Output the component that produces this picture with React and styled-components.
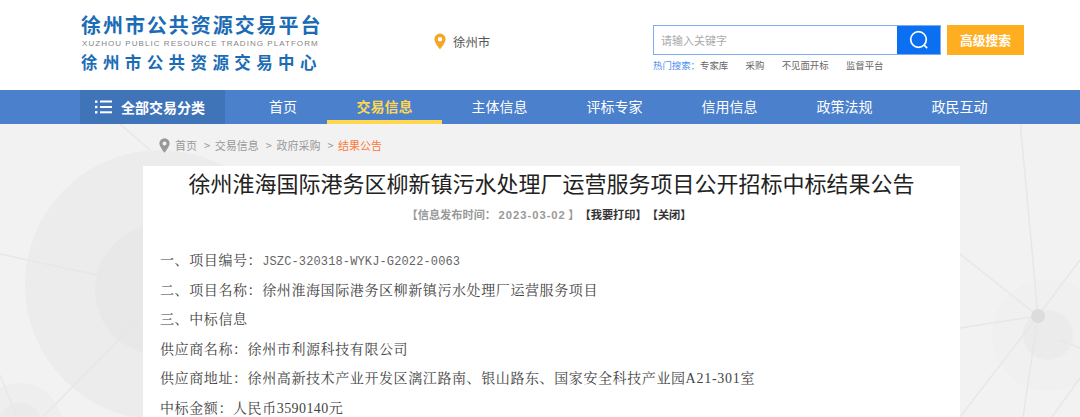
import React from 'react';
import styled, { createGlobalStyle } from 'styled-components';

const sans = `"Noto Sans CJK SC", "Liberation Sans", sans-serif`;
const serif = `"Noto Serif CJK SC", "Noto Sans CJK SC", "Liberation Serif", serif`;

const GlobalStyle = createGlobalStyle`
    html, body {
        margin: 0;
        padding: 0;
        height: 417px;
        overflow: hidden;
        background: #f2f2f2;
        font-family: ${sans};
    }
`;

const Page = styled.div`
    position: relative;
    width: 1080px;
    height: 417px;
    overflow: hidden;
`;

const Header = styled.header`
    height: 90px;
    background: #fff;
    display: grid;
    grid-template-columns: 353px 219px auto;
    padding-left: 81px;
    box-sizing: border-box;
`;

const Logo = styled.div`
    width: 240px;
    padding-top: 11px;
    color: #1b6cb5;
    font-weight: 700;
`;

const LogoLine = styled.div`
    font-size: ${props => props.size}px;
    line-height: ${props => props.height}px;
    letter-spacing: ${props => props.spacing}px;
    white-space: nowrap;
`;

const LogoSub = styled.div`
    font-family: "Liberation Sans", sans-serif;
    font-size: 8px;
    font-weight: 400;
    line-height: 12px;
    letter-spacing: 1.05px;
    color: #858585;
    white-space: nowrap;
    padding-left: 1px;
`;

const City = styled.div`
    display: flex;
    align-items: center;
    gap: 7px;
    height: 83px;
    font-size: 12.4px;
    color: #555;
`;

const SearchArea = styled.div`
    padding-top: 25px;
`;

const SearchRow = styled.div`
    display: flex;
    gap: 6px;
`;

const SearchBox = styled.div`
    width: 288px;
    height: 30px;
    box-sizing: border-box;
    border: 1px solid #7fabee;
    display: flex;
`;

const SearchInput = styled.input`
    flex: 1;
    min-width: 0;
    border: 0;
    outline: 0;
    padding: 0 0 0 7px;
    font-family: ${sans};
    font-size: 11px;
    &::placeholder {
        color: #aaa;
        opacity: 1;
    }
`;

const SearchButton = styled.div`
    width: 43px;
    background: #0a6ff0;
    display: flex;
    align-items: center;
    justify-content: center;
`;

const AdvancedButton = styled.div`
    width: 77px;
    height: 30px;
    background: #ffae22;
    color: #fff;
    font-size: 12.8px;
    font-weight: 700;
    line-height: 30px;
    text-align: center;
`;

const HotRow = styled.div`
    display: flex;
    margin-top: 4px;
    font-size: 9.4px;
    line-height: 13px;
    color: #666;
`;

const HotLabel = styled.span`
    color: #4b8ff0;
    width: 47px;
`;

const HotLink = styled.span`
    margin-right: 17.4px;
`;

const Nav = styled.nav`
    height: 34px;
    background: #4a80cc;
    display: flex;
    padding-left: 80px;
`;

const Category = styled.div`
    width: 145px;
    background: #3f74b9;
    color: #fff;
    display: flex;
    align-items: center;
    gap: 9px;
    padding-left: 15px;
    box-sizing: border-box;
    font-size: 14px;
    font-weight: 700;
`;

const NavItem = styled.div`
    width: 115px;
    box-sizing: border-box;
    text-align: center;
    font-size: 14px;
    line-height: 33px;
    color: ${props => (props.active ? '#ffd64f' : '#fff')};
    font-weight: ${props => (props.active ? 700 : 400)};
    border-bottom: ${props => (props.active ? '4px solid #ffd64f' : '0')};
    &:nth-of-type(2) {
        width: 102px;
        padding-left: 14px;
    }
`;

const Backdrop = styled.svg`
    position: absolute;
    left: 0;
    top: 124px;
    z-index: 0;
`;

const Main = styled.main`
    position: relative;
    z-index: 1;
    width: 817px;
    margin-left: 143px;
`;

const Crumbs = styled.div`
    height: 42px;
    padding-left: 16px;
    display: flex;
    align-items: center;
    font-size: 11px;
    color: #999;
`;

const Crumb = styled.span`
    color: ${props => (props.current ? '#ff7a3a' : '#999')};
    margin-left: ${props => props.gap || 0}px;
`;

const Article = styled.article`
    background: #fff;
    height: 251px;
    overflow: hidden;
`;

const Title = styled.h1`
    margin: 0;
    text-align: center;
    font-size: 22px;
    font-weight: 400;
    line-height: 33px;
    color: #222;
    white-space: nowrap;
`;

const Meta = styled.div`
    margin-top: 7px;
    padding-right: 5px;
    display: flex;
    justify-content: center;
    font-size: 11.2px;
    font-weight: 700;
    line-height: 17px;
    color: #333;
`;

const MetaDate = styled.span`
    color: #999;
`;

const MetaNumber = styled.span`
    font-family: "Liberation Sans", sans-serif;
    letter-spacing: 1px;
`;

const Body = styled.div`
    padding: 21px 0 0 17px;
    font-family: ${serif};
    font-size: 14px;
    letter-spacing: 0.6px;
    color: #444;
`;

const Line = styled.p`
    margin: 0;
    line-height: 29.5px;
    white-space: nowrap;
`;

const Code = styled.span`
    font-family: "Liberation Mono", monospace;
    font-size: 12px;
    line-height: 1;
    letter-spacing: 0.13px;
    color: #666;
`;

const Latin = styled.span`
    font-family: "Liberation Serif", serif;
    line-height: 1;
    letter-spacing: ${props => props.spacing}px;
`;

const PinIcon = ({ color, w, h }) => (
    <svg width={w} height={h} viewBox="0 0 12 16">
        <path
            fillRule="evenodd"
            fill={color}
            d="M6 0a5.6 5.6 0 0 0-5.6 5.6C.4 9.4 6 16 6 16s5.6-6.6 5.6-10.4A5.6 5.6 0 0 0 6 0Zm0 3.5a2.2 2.2 0 1 1 0 4.4 2.2 2.2 0 0 1 0-4.4Z"
        />
    </svg>
);

const MenuIcon = () => (
    <svg width="17" height="14" viewBox="0 0 17 14" fill="#fff">
        <rect x="0" y="0.5" width="2.4" height="2.4" />
        <rect x="0" y="5.8" width="2.4" height="2.4" />
        <rect x="0" y="11.1" width="2.4" height="2.4" />
        <rect x="5" y="0.5" width="12" height="2" />
        <rect x="5" y="6" width="12" height="2" />
        <rect x="5" y="11.3" width="12" height="2" />
    </svg>
);

const SearchIcon = () => (
    <svg width="20" height="20" viewBox="0 0 20 20" fill="none" stroke="#fff" strokeWidth="1.7">
        <circle cx="9.5" cy="9.5" r="7.8" />
        <path d="M15.4 15.4l2.8 2.8" />
    </svg>
);

const bgLines = [
    'M0 254L143 285', 'M143 315L43 417', 'M0 375L17 417',
    'M120 124L150 150', 'M1038 316L960 254', 'M1038 316L960 328',
    'M1038 316L960 417', 'M1038 316L1023 417', 'M1038 316L1020 120',
    'M1038 316L1080 260', 'M1080 378L1052 417', 'M1060 340L1080 348',
];

const Background = () => (
    <Backdrop width="1080" height="293" viewBox="0 124 1080 293">
        <circle cx="160" cy="285" r="135" fill="#ececec" />
        <circle cx="160" cy="290" r="65" fill="#e8e8e8" />
        <circle cx="20" cy="425" r="42" fill="#eeeeee" />
        <circle cx="20" cy="425" r="22" fill="#eaeaea" />
        <circle cx="1048" cy="335" r="56" fill="#f0f0f0" />
        <circle cx="1048" cy="335" r="25" fill="#ebebeb" />
        {bgLines.map(d => (
            <path key={d} d={d} stroke="#e7e7e7" strokeWidth="1.5" fill="none" />
        ))}
        <circle cx="1038" cy="316" r="7" fill="#dcdcdc" />
    </Backdrop>
);

const navItems = ['首页', '交易信息', '主体信息', '评标专家', '信用信息', '政策法规', '政民互动'];
const hotLinks = ['专家库', '采购', '不见面开标', '监督平台'];

export default function App() {
    return (
        <Page>
            <GlobalStyle />
            <Header>
                <Logo>
                    <LogoLine size={20} height={27} spacing={1.95}>徐州市公共资源交易平台</LogoLine>
                    <LogoSub>XUZHOU PUBLIC RESOURCE TRADING PLATFORM</LogoSub>
                    <LogoLine size={16.5} height={24} spacing={5.4}>徐州市公共资源交易中心</LogoLine>
                </Logo>
                <City>
                    <PinIcon color="#f5a623" w={12} h={17} />
                    徐州市
                </City>
                <SearchArea>
                    <SearchRow>
                        <SearchBox>
                            <SearchInput placeholder="请输入关键字" />
                            <SearchButton><SearchIcon /></SearchButton>
                        </SearchBox>
                        <AdvancedButton>高级搜索</AdvancedButton>
                    </SearchRow>
                    <HotRow>
                        <HotLabel>热门搜索：</HotLabel>
                        {hotLinks.map(link => <HotLink key={link}>{link}</HotLink>)}
                    </HotRow>
                </SearchArea>
            </Header>
            <Nav>
                <Category><MenuIcon />全部交易分类</Category>
                {navItems.map(item => (
                    <NavItem key={item} active={item === '交易信息'}>{item}</NavItem>
                ))}
            </Nav>
            <Background />
            <Main>
                <Crumbs>
                    <PinIcon color="#999" w={11} h={15} />
                    <Crumb gap={5}>首页</Crumb>
                    <Crumb gap={7}>&gt;</Crumb>
                    <Crumb gap={4.6}>交易信息</Crumb>
                    <Crumb gap={7}>&gt;</Crumb>
                    <Crumb gap={4.6}>政府采购</Crumb>
                    <Crumb gap={7}>&gt;</Crumb>
                    <Crumb gap={4.6} current>结果公告</Crumb>
                </Crumbs>
                <Article>
                    <Title>徐州淮海国际港务区柳新镇污水处理厂运营服务项目公开招标中标结果公告</Title>
                    <Meta>
                        <MetaDate>【信息发布时间： <MetaNumber>2023-03-02</MetaNumber> 】</MetaDate>
                        <span>【我要打印】</span>
                        <span>【关闭】</span>
                    </Meta>
                    <Body>
                        <Line>一、项目编号：<Code>JSZC-320318-WYKJ-G2022-0063</Code></Line>
                        <Line>二、项目名称：徐州淮海国际港务区柳新镇污水处理厂运营服务项目</Line>
                        <Line>三、中标信息</Line>
                        <Line>供应商名称：徐州市利源科技有限公司</Line>
                        <Line>供应商地址：徐州高新技术产业开发区漓江路南、银山路东、国家安全科技产业园<Latin spacing={0.73}>A21-301</Latin>室</Line>
                        <Line>中标金额：人民币<Latin spacing={0.4}>3590140</Latin>元</Line>
                    </Body>
                </Article>
            </Main>
        </Page>
    );
}
